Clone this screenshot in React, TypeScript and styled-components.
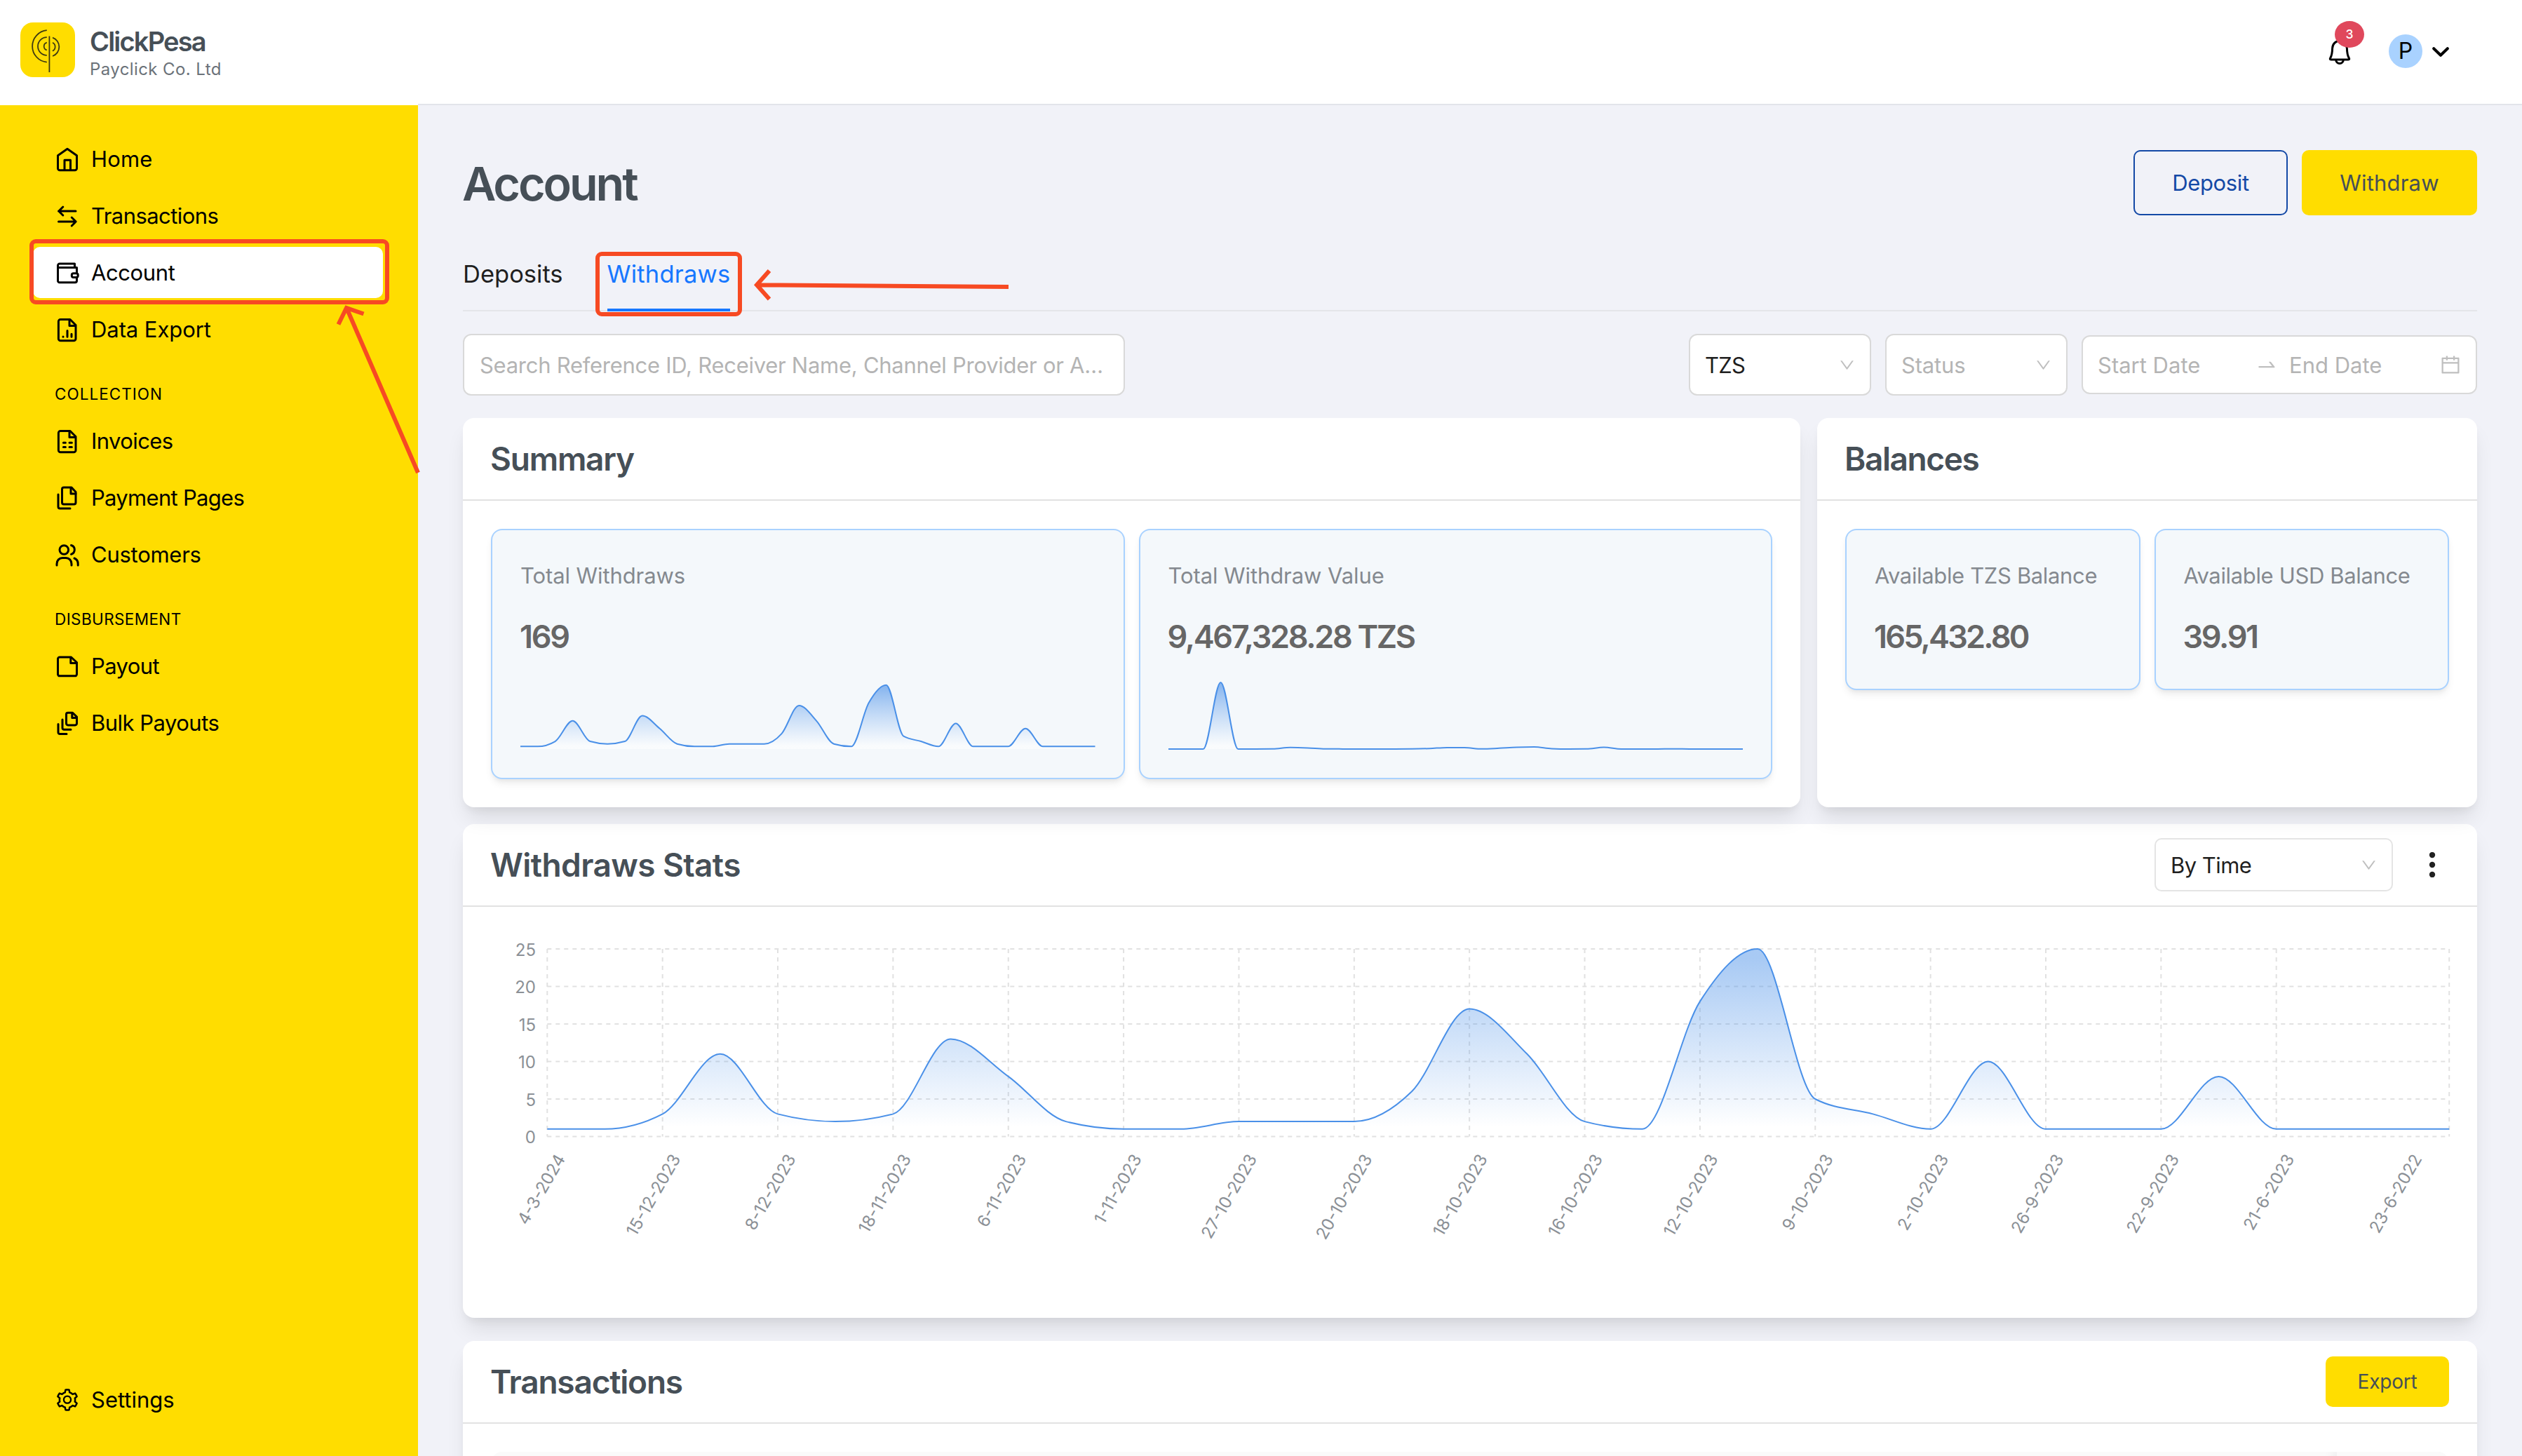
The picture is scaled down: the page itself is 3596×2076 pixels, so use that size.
import React from 'react';
import styled, { createGlobalStyle } from 'styled-components';
import {
  AiOutlineCalendar,
  AiOutlineDown,
  AiOutlineSetting,
  AiOutlineSwapRight,
} from 'react-icons/ai';

interface NavEntry {
  label: string;
  icon: React.ReactNode;
  spacing?: number;
  active?: boolean;
}

interface NavGroup {
  title?: string;
  spacing?: number;
  items: NavEntry[];
}

// ---------- icons ----------

const Icon: React.FC<{ children: React.ReactNode }> = ({ children }) => (
  <svg
    width="36"
    height="36"
    viewBox="0 0 36 36"
    fill="none"
    stroke="currentColor"
    strokeWidth="3"
    strokeLinecap="round"
    strokeLinejoin="round"
  >
    {children}
  </svg>
);

const HomeIcon = () => (
  <Icon>
    <path d="M4.5 12.8 18 3.3l13.500 9.500V31a2.800 2.800 0 0 1-2.800 2.800H7.300A2.800 2.800 0 0 1 4.500 31z" />
    <path d="M14 33V19.300h8.500V33" />
  </Icon>
);

const TransactionsIcon = () => (
  <Icon>
    <path d="M30 11H5.500M11.800 5l-6 6 6 6M5.500 26H30M24.200 20l6 6-6 6" />
  </Icon>
);

const AccountIcon = () => (
  <Icon>
    <path d="M28.500 10.500V5H7a2.500 2.500 0 0 0-2.500 2.500V29A2.500 2.500 0 0 0 7 31.700h22a2.500 2.500 0 0 0 2.500-2.500V10.500h-27" />
    <rect x="24.300" y="18.700" width="8.900" height="5.800" rx="2.500" fill="#fff" />
  </Icon>
);

const DOC_OUTLINE = 'M22 3.500H8.200a2.800 2.800 0 0 0-2.800 2.800V31a2.800 2.800 0 0 0 2.800 2.800h19A2.800 2.800 0 0 0 30 31V11.500z';

const DataExportIcon = () => (
  <Icon>
    <path d={DOC_OUTLINE} />
    <path d="M21 4v8.500h8.500M12 28v.3M18 19.500v8.800M24 24.300v4" />
  </Icon>
);

const InvoicesIcon = () => (
  <Icon>
    <path d={DOC_OUTLINE} />
    <path d="M21 4v8.500h8.500M12.400 20.300h3M21 20.300h3.400M12.400 26.500h3M21 26.500h3.400" />
  </Icon>
);

const PagesIcon = () => (
  <Icon>
    <path d="M24 3H13a2.500 2.500 0 0 0-2.500 2.500V24.500A2.500 2.500 0 0 0 13 27h14.500a2.500 2.500 0 0 0 2.500-2.500V9.500z" />
    <path d="M23 3.500v8.500h7M5 13v17.500A2.500 2.500 0 0 0 7.500 33H22" />
  </Icon>
);

const CustomersIcon = () => (
  <Icon>
    <circle cx="13.300" cy="11" r="6.300" />
    <path d="M3 33v-2c0-5 3.500-8.500 8-8.500h5c4.500 0 8 3.500 8 8.500v2M23.500 4.500c3 .8 4.800 3.200 4.800 6.300s-1.800 5.500-4.800 6.500M28 23c3.200 1.200 5.200 4 5.200 8v2" />
  </Icon>
);

const PayoutIcon = () => (
  <Icon>
    <path d="M23.500 5H7a2.500 2.500 0 0 0-2.500 2.500v21.800A2.500 2.500 0 0 0 7 31.800h22a2.500 2.500 0 0 0 2.500-2.500V12.500z" />
    <path d="M22.800 5.500v8h8.500" />
  </Icon>
);

const BulkIcon = () => (
  <Icon>
    <path d="M25.500 3.300H18.800a2.300 2.300 0 0 0-2.300 2.300v13a2.300 2.300 0 0 0 2.300 2.300h10.400a2.300 2.300 0 0 0 2.300-2.300V9z" />
    <path d="M24.800 4v6.500h6.200M11 13v12a2.300 2.300 0 0 0 2.300 2.300H23M5 19.500V31.200a2.300 2.300 0 0 0 2.300 2.300H17" />
  </Icon>
);

const Logo = () => (
  <svg width="78" height="78" viewBox="0 0 78 78" fill="none" stroke="#3d3a12" strokeWidth="1.800">
    <path d="M41.400 19.500v51.500" />
    <path d="M37.800 11.200a22.800 22.800 0 0 0 0 45.400M37.800 21.200a12.800 12.800 0 0 0 0 25.600M37.800 28.600a5.600 5.600 0 0 0 0 10.800" />
    <path d="M46 21.600a14 14 0 0 1 0 26.400M46 28.800a6.600 6.600 0 0 1 0 11.800" />
  </svg>
);

const BellIcon = () => (
  <svg width="36" height="40" viewBox="0 0 36 40" fill="none" stroke="#000" strokeWidth="3" strokeLinejoin="round">
    <path d="M18 4.500c-6 0-10.200 4.200-10.400 10.500-.2 8-1 10.500-2.800 13.500-1 1.800-.6 2.400.9 2.400h24.600c1.500 0 1.900-.6.9-2.400-1.800-3-2.600-5.500-2.800-13.500C28.200 8.700 24 4.500 18 4.500z" />
    <path d="M12.700 31a5.300 5.500 0 0 0 10.600 0" />
  </svg>
);

// ---------- data ----------

const nav: NavGroup[] = [
  {
    items: [
      { label: 'Home', icon: <HomeIcon />, spacing: 0.14 },
      { label: 'Transactions', icon: <TransactionsIcon />, spacing: -0.56 },
      { label: 'Account', icon: <AccountIcon />, spacing: -0.4, active: true },
      { label: 'Data Export', icon: <DataExportIcon />, spacing: -0.07 },
    ],
  },
  {
    title: 'COLLECTION',
    spacing: 1.02,
    items: [
      { label: 'Invoices', icon: <InvoicesIcon />, spacing: -0.58 },
      { label: 'Payment Pages', icon: <PagesIcon />, spacing: -0.7 },
      { label: 'Customers', icon: <CustomersIcon />, spacing: -0.26 },
    ],
  },
  {
    title: 'DISBURSEMENT',
    spacing: 0.39,
    items: [
      { label: 'Payout', icon: <PayoutIcon />, spacing: -0.6 },
      { label: 'Bulk Payouts', icon: <BulkIcon />, spacing: -0.52 },
    ],
  },
];

const withdrawCounts = [
  1, 1, 3, 11, 3, 2, 3, 13, 8, 2, 1, 1, 2, 2, 2, 6, 17, 11, 2, 1, 18, 25, 5, 3, 1, 10, 1, 1, 1, 8, 1, 1, 1, 1,
];

const withdrawValues = [
  0, 0, 0, 95, 0, 0, 0.2, 2.2, 1.6, 0.3, 0.1, 0, 0, 0, 0.2, 0.8, 2.1, 2, 0.2, 1.2, 2.5, 2.9, 0.6, 0.1, 0.2, 2.5, 0.1,
  0, 0, 0.3, 0, 0, 0, 0,
];

const dates = [
  '4-3-2024', '15-12-2023', '8-12-2023', '18-11-2023', '6-11-2023', '1-11-2023', '27-10-2023', '20-10-2023',
  '18-10-2023', '16-10-2023', '12-10-2023', '9-10-2023', '2-10-2023', '26-9-2023', '22-9-2023', '21-6-2023',
];

// ---------- chart helpers ----------

type Point = [number, number];

// monotone cubic interpolation, so the curve never overshoots a data point
const monotonePath = (pts: Point[]) => {
  const n = pts.length;
  const slope = pts.slice(1).map((p, i) => (p[1] - pts[i][1]) / (p[0] - pts[i][0]));
  const tan = pts.map((_, i) => {
    if (i === 0 || i === n - 1) return 0;
    const a = slope[i - 1];
    const b = slope[i];
    if (a * b <= 0) return 0;
    return Math.sign(a) * 2 * Math.min(Math.abs(a), Math.abs(b), Math.abs(a + b) / 4);
  });
  let d = `M${pts[0][0]} ${pts[0][1]}`;
  for (let i = 1; i < n; i++) {
    const h = (pts[i][0] - pts[i - 1][0]) / 3;
    d += `C${pts[i - 1][0] + h} ${pts[i - 1][1] + tan[i - 1] * h} ${pts[i][0] - h} ${pts[i][1] - tan[i] * h} ${pts[i][0]} ${pts[i][1]}`;
  }
  return d;
};

const Sparkline: React.FC<{ id: string; data: number[]; unit: number }> = ({ id, data, unit }) => {
  const pts = data.map((v, i): Point => [(i * 819.5) / (data.length - 1), 100 - v * unit]);
  const line = monotonePath(pts);
  return (
    <SparkSvg width="819.5" height="101" viewBox="0 0 819.5 101">
      <defs>
        <linearGradient id={id} x1="0" y1="0" x2="0" y2="1">
          <stop offset="5%" stopColor="#4a90e8" stopOpacity="0.62" />
          <stop offset="95%" stopColor="#fff" stopOpacity="0.5" />
        </linearGradient>
      </defs>
      <path d={`${line}L819.5 100L0 100Z`} fill={`url(#${id})`} />
      <path d={line} fill="none" stroke="#4a90e8" strokeWidth="2" />
    </SparkSvg>
  );
};

const X0 = 120.3;
const STEP = 82.18;
const TOP = 60;
const BOTTOM = 327.5;

const StatsChart = () => {
  const y = (v: number) => BOTTOM - (v * (BOTTOM - TOP)) / 25;
  const pts = withdrawCounts.map((v, i): Point => [X0 + i * STEP, y(v)]);
  const right = pts[pts.length - 1][0];
  const line = monotonePath(pts);
  const ticks = dates.map((label, i) => ({ label, x: X0 + i * 2 * STEP }));
  return (
    <svg width="2872" height="586" viewBox="0 0 2872 586">
      <defs>
        <linearGradient id="stats" x1="0" y1="0" x2="0" y2="1">
          <stop offset="5%" stopColor="#4a90e8" stopOpacity="0.48" />
          <stop offset="95%" stopColor="#4a90e8" stopOpacity="0" />
        </linearGradient>
      </defs>
      <g stroke="#e1e1e1" strokeWidth="2" strokeDasharray="6 6">
        {[0, 5, 10, 15, 20, 25].map((v) => (
          <line key={v} x1={X0} x2={right} y1={y(v)} y2={y(v)} />
        ))}
        {ticks.map(({ x }) => (
          <line key={x} x1={x} x2={x} y1={TOP} y2={BOTTOM} />
        ))}
        <line x1={right} x2={right} y1={TOP} y2={BOTTOM} />
      </g>
      <path d={`${line}L${right} ${BOTTOM}L${X0} ${BOTTOM}Z`} fill="url(#stats)" />
      <path d={line} fill="none" stroke="#4a90e8" strokeWidth="2" />
      <AxisText>
        {[0, 5, 10, 15, 20, 25].map((v) => (
          <text key={v} x="104" y={y(v) + 9.5}>{v}</text>
        ))}
        {ticks.map(({ label, x }) => (
          <text key={label} transform={`translate(${x + 26.5} 359) rotate(-60)`}>{label}</text>
        ))}
        <text transform="translate(2794 359) rotate(-60)">23-6-2022</text>
      </AxisText>
    </svg>
  );
};

// ---------- page ----------

const App: React.FC = () => {
  return (
    <Page>
      <GlobalStyle />
      <Sidebar>
        <Brand>
          <LogoTile><Logo /></LogoTile>
          <div>
            <BrandName>ClickPesa</BrandName>
            <BrandCompany>Payclick Co. Ltd</BrandCompany>
          </div>
        </Brand>
        <Nav>
          {nav.map((group, i) => (
            <React.Fragment key={i}>
              {group.title && <NavHeading $ls={group.spacing}>{group.title}</NavHeading>}
              {group.items.map((item) => (
                <NavItem key={item.label} $active={item.active} $ls={item.spacing}>
                  {item.icon}
                  {item.label}
                  {item.active && <NavHighlight />}
                </NavItem>
              ))}
            </React.Fragment>
          ))}
          <NavFooter>
            <NavItem>
              <AiOutlineSetting size={36} />
              Settings
            </NavItem>
          </NavFooter>
        </Nav>
      </Sidebar>

      <Main>
        <Topbar>
          <BellButton>
            <BellIcon />
            <Badge>3</Badge>
          </BellButton>
          <Avatar>P</Avatar>
          <svg width="24" height="16" viewBox="0 0 24 16" fill="none" stroke="#000" strokeWidth="4" strokeLinecap="round" strokeLinejoin="round">
            <path d="M2.200 3.200 12 12.800l9.800-9.600" />
          </svg>
        </Topbar>

        <Content>
          <TitleRow>
            <PageTitle>Account</PageTitle>
            <Button $variant="outline" $width={220} $ls={-0.35}>Deposit</Button>
            <Button $width={250} $ls={0.2}>Withdraw</Button>
          </TitleRow>

          <Tabs>
            <Tab>Deposits</Tab>
            <Tab $active>
              Withdraws
              <TabHighlight />
            </Tab>
          </Tabs>

          <Filters>
            <Search>Search Reference ID, Receiver Name, Channel Provider or A…</Search>
            <Select $width={260} $ls={-0.8}>
              TZS
              <AiOutlineDown size={25} />
            </Select>
            <Select $width={260} $muted $ls={-0.17}>
              Status
              <AiOutlineDown size={25} />
            </Select>
            <DateRange>
              <span>Start Date</span>
              <AiOutlineSwapRight size={32} />
              <span>End Date</span>
              <AiOutlineCalendar size={32} />
            </DateRange>
          </Filters>

          <Overview>
            <Card>
              <CardHeader><CardTitle $ls={-1.2}>Summary</CardTitle></CardHeader>
              <Metrics>
                <Metric>
                  <MetricLabel $ls={-0.09}>Total Withdraws</MetricLabel>
                  <MetricValue $ls={-2.26}>169</MetricValue>
                  <Sparkline id="count" data={withdrawCounts} unit={3.654} />
                </Metric>
                <Metric>
                  <MetricLabel $ls={-0.09}>Total Withdraw Value</MetricLabel>
                  <MetricValue $ls={-2.33}>9,467,328.28 TZS</MetricValue>
                  <Sparkline id="value" data={withdrawValues} unit={1} />
                </Metric>
              </Metrics>
            </Card>
            <Card>
              <CardHeader><CardTitle $ls={-1.4}>Balances</CardTitle></CardHeader>
              <Metrics>
                <Metric>
                  <MetricLabel $ls={-0.35}>Available TZS Balance</MetricLabel>
                  <MetricValue $ls={-2.81}>165,432.80</MetricValue>
                </Metric>
                <Metric>
                  <MetricLabel $ls={-0.35}>Available USD Balance</MetricLabel>
                  <MetricValue $ls={-2.3}>39.91</MetricValue>
                </Metric>
              </Metrics>
            </Card>
          </Overview>

          <StatsCard>
            <CardHeader>
              <CardTitle $ls={-0.6}>Withdraws Stats</CardTitle>
              <SmallSelect $width={340} $ls={-0.55}>
                By Time
                <AiOutlineDown size={25} />
              </SmallSelect>
              <MoreButton>
                <svg width="10" height="36" viewBox="0 0 10 36" fill="#222">
                  <circle cx="5" cy="4" r="4.200" />
                  <circle cx="5" cy="18" r="4.200" />
                  <circle cx="5" cy="32" r="4.200" />
                </svg>
              </MoreButton>
            </CardHeader>
            <StatsChart />
          </StatsCard>

          <Card>
            <CardHeader>
              <CardTitle $ls={-1.2}>Transactions</CardTitle>
              <ExportButton $ls={-0.2}>Export</ExportButton>
            </CardHeader>
            <TableHead>
              <span />
              <StickyCell />
            </TableHead>
          </Card>
        </Content>
      </Main>

      <Arrows viewBox="0 0 3596 2076">
        <path d="M596 674 495 441M482.500 462.500 494 439l24.500 8.500" />
        <path d="M1438 409 1079 406.300M1097 386l-18 20.300 18 20.300" />
      </Arrows>
    </Page>
  );
};

const GlobalStyle = createGlobalStyle`
  *, *::before, *::after {
    box-sizing: border-box;
  }

  body {
    margin: 0;
    font-family: 'Inter', sans-serif;
    font-size: 31px;
    color: #000;
  }

  svg {
    display: block;
    flex-shrink: 0;
  }
`;

interface Spaced {
  $ls?: number;
}

const Page = styled.div`
  position: relative;
  display: grid;
  grid-template-columns: 596px 1fr;
  height: 2076px;
  overflow: hidden;
  background: #f1f2f8;
  white-space: nowrap;
`;

const Sidebar = styled.aside`
  display: flex;
  flex-direction: column;
  height: 2076px;
`;

const Brand = styled.div`
  display: flex;
  align-items: flex-start;
  gap: 21px;
  height: 150px;
  padding: 32px 29px 0;
  background: #fff;
`;

const LogoTile = styled.div`
  border-radius: 18px;
  background: #ffdd00;
`;

const BrandName = styled.div`
  margin-top: 7px;
  font-size: 38px;
  font-weight: 600;
  line-height: 40px;
  letter-spacing: -1.8px;
  color: #464f57;
`;

const BrandCompany = styled.div`
  margin-top: 4px;
  font-size: 24px;
  line-height: 32px;
  letter-spacing: 0.4px;
  color: #6b7279;
`;

const Nav = styled.nav`
  flex: 1;
  display: flex;
  flex-direction: column;
  gap: 8px;
  padding: 40px 50px 44px 47px;
  background: #ffdd00;
`;

const NavHeading = styled.div<Spaced>`
  height: 70px;
  padding: 25px 0 0 31px;
  font-size: 22.5px;
  line-height: 45px;
  letter-spacing: ${({ $ls = 0 }) => $ls}px;
`;

const NavItem = styled.a<Spaced & { $active?: boolean }>`
  position: relative;
  display: flex;
  align-items: center;
  gap: 16px;
  height: 73px;
  padding-left: 31px;
  border-radius: 10px;
  background: ${({ $active }) => ($active ? '#fff' : 'transparent')};
  letter-spacing: ${({ $ls = 0 }) => $ls}px;
`;

const NavHighlight = styled.span`
  position: absolute;
  inset: -11px -9px -9px -5px;
  border: 6px solid #f74a23;
  border-radius: 9px;
`;

const NavFooter = styled.div`
  margin-top: auto;
`;

const Main = styled.main`
  height: 2076px;
  overflow: hidden;
`;

const Topbar = styled.header`
  display: flex;
  align-items: center;
  justify-content: flex-end;
  height: 150px;
  padding-right: 104px;
  border-bottom: 2px solid #e2e4ea;
  background: #fff;
`;

const BellButton = styled.div`
  position: relative;
  margin-right: 52px;
`;

const Badge = styled.span`
  position: absolute;
  top: -24px;
  left: 11px;
  width: 42px;
  height: 38px;
  border-radius: 21px / 19px;
  background: #e0485c;
  color: #fff;
  font-size: 17.5px;
  font-weight: 500;
  line-height: 38px;
  text-align: center;
`;

const Avatar = styled.div`
  width: 48px;
  height: 48px;
  margin: 0 14px 2px 0;
  border-radius: 50%;
  background: #a9d2ff;
  font-size: 32px;
  line-height: 48px;
  text-align: center;
`;

const Content = styled.div`
  padding: 64px 64px 0;
`;

const TitleRow = styled.div`
  display: flex;
  align-items: center;
  gap: 20px;
  height: 93px;
`;

const PageTitle = styled.h1`
  margin: 2px auto 0 -1px;
  font-size: 66.5px;
  font-weight: 600;
  letter-spacing: -3.1px;
  color: #464f57;
`;

const Button = styled.button<Spaced & { $width: number; $variant?: 'outline' }>`
  width: ${({ $width }) => $width}px;
  height: 93px;
  padding: 0;
  border: ${({ $variant }) => ($variant === 'outline' ? '2px solid #1449a6' : 'none')};
  border-radius: 10px;
  background: ${({ $variant }) => ($variant === 'outline' ? 'transparent' : '#ffdd00')};
  color: ${({ $variant }) => ($variant === 'outline' ? '#1449a6' : '#464f57')};
  font: inherit;
  letter-spacing: ${({ $ls = 0 }) => $ls}px;
`;

const ExportButton = styled(Button).attrs({ $width: 176 })`
  height: 72px;
  font-size: 28px;
`;

const Tabs = styled.div`
  display: flex;
  gap: 63px;
  margin-top: 33px;
  border-bottom: 2px solid #e4e5e9;
`;

const Tab = styled.div<{ $active?: boolean }>`
  position: relative;
  font-size: 34.5px;
  line-height: 102px;
  letter-spacing: ${({ $active }) => ($active ? 0.2 : 0)}px;
  color: ${({ $active }) => ($active ? '#1677ff' : '#1f1f1f')};

  &::after {
    content: '';
    position: absolute;
    right: 0;
    bottom: -2px;
    left: 0;
    height: 4px;
    background: ${({ $active }) => ($active ? '#1677ff' : 'transparent')};
  }
`;

const TabHighlight = styled.span`
  position: absolute;
  inset: 19px -17px -9px;
  border: 6px solid #f74a23;
  border-radius: 9px;
`;

const Filters = styled.div`
  display: flex;
  align-items: center;
  gap: 20px;
  margin: 32px 0;
`;

const Field = styled.div`
  display: flex;
  align-items: center;
  height: 88px;
  border: 2px solid #d9d9d9;
  border-radius: 12px;
  background: #fff;
`;

const Search = styled(Field)`
  width: 944px;
  margin-right: auto;
  padding-left: 22px;
  color: #b4b4b4;
  letter-spacing: -0.27px;
`;

const Select = styled(Field)<Spaced & { $width: number; $muted?: boolean }>`
  justify-content: space-between;
  width: ${({ $width }) => $width}px;
  padding: 0 20px 0 21px;
  color: ${({ $muted }) => ($muted ? '#b4b4b4' : '#1f1f1f')};
  letter-spacing: ${({ $ls = 0 }) => $ls}px;

  svg {
    color: #bfbfbf;
  }
`;

const SmallSelect = styled(Select)`
  height: 76px;
  border-color: #e4e4e4;
  border-radius: 10px;
`;

const DateRange = styled(Field)`
  display: grid;
  grid-template-columns: 209px 32px 1fr 32px;
  column-gap: 16px;
  width: 564px;
  height: 84px;
  padding: 0 20px 0 21px;
  color: #b4b4b4;

  svg {
    color: #bfbfbf;
  }
`;

const Overview = styled.div`
  display: grid;
  grid-template-columns: 1907px 941px;
  gap: 24px;
  margin-bottom: 24px;
`;

const Card = styled.section`
  min-height: 555px;
  border-radius: 16px;
  background: #fff;
  box-shadow: 0 20px 30px -6px rgba(0, 0, 0, 0.1), 0 8px 12px -4px rgba(0, 0, 0, 0.05);
`;

const StatsCard = styled(Card)`
  height: 704px;
  margin-bottom: 33px;
`;

const CardHeader = styled.header`
  display: flex;
  align-items: center;
  height: 118px;
  padding: 0 40px;
  border-bottom: 2px solid #e2e2e2;
`;

const CardTitle = styled.h2<Spaced>`
  margin: 0 auto 0 -1px;
  font-size: 46px;
  font-weight: 600;
  letter-spacing: ${({ $ls = 0 }) => $ls}px;
  color: #464f57;
`;

const MoreButton = styled.div`
  display: flex;
  justify-content: center;
  width: 48px;
  margin-left: 32px;
`;

const Metrics = styled.div`
  display: flex;
  align-items: flex-start;
  gap: 20px;
  padding: 40px;
`;

const Metric = styled.div`
  flex: 1;
  min-height: 230px;
  padding: 40px 40px 40px;
  border: 2px solid #a9d2ff;
  border-radius: 16px;
  background: #f4f8fb;
  box-shadow: 0 8px 12px -2px rgba(0, 0, 0, 0.07), 0 4px 6px -2px rgba(0, 0, 0, 0.05);
`;

const MetricLabel = styled.div<Spaced>`
  line-height: 50px;
  letter-spacing: ${({ $ls = 0 }) => $ls}px;
  color: #84898f;
`;

const MetricValue = styled.div<Spaced>`
  margin: 32px 0 0 -1px;
  font-size: 45px;
  font-weight: 600;
  line-height: 60px;
  letter-spacing: ${({ $ls = 0 }) => $ls}px;
  color: #666;
`;

const SparkSvg = styled.svg`
  margin-top: 30px;
`;

const AxisText = styled.g`
  font-size: 24px;
  fill: #8b9096;
  text-anchor: end;
`;

const TableHead = styled.div`
  display: grid;
  grid-template-columns: 1fr 160px;
  height: 110px;
  margin: 40px 40px 0;
  border-radius: 16px 16px 0 0;
  background: #fafafa;
  overflow: hidden;
`;

const StickyCell = styled.div`
  background: #fafafa;
  box-shadow: -4px 0 16px rgba(0, 0, 0, 0.08);
`;

// hand-drawn pointers that sit above the whole page
const Arrows = styled.svg`
  position: absolute;
  inset: 0;
  width: 3596px;
  height: 2076px;
  fill: none;
  stroke: #f74a23;
  stroke-width: 6;
  pointer-events: none;
`;

export default App;
